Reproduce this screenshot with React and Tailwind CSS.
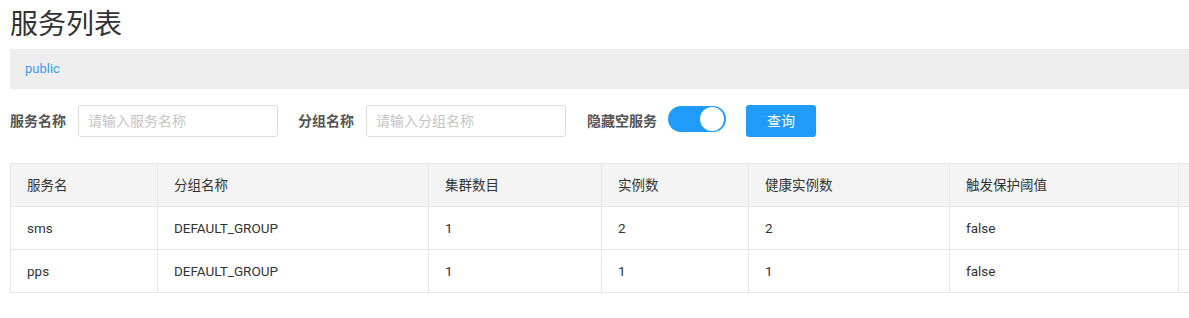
import React from "react";

const cols = [
  { title: "服务名", w: "w-[147px]" },
  { title: "分组名称", w: "w-[271px]" },
  { title: "集群数目", w: "w-[173px]" },
  { title: "实例数", w: "w-[147px]" },
  { title: "健康实例数", w: "w-[201px]" },
  { title: "触发保护阈值", w: "w-[229px]" },
  { title: "", w: "w-[200px]" },
];

const rows = [
  ["sms", "DEFAULT_GROUP", "1", "2", "2", "false", ""],
  ["pps", "DEFAULT_GROUP", "1", "1", "1", "false", ""],
];

const font = "font-['Roboto','Noto_Sans_CJK_SC',sans-serif]";

const App = () => {
  return (
    <div className={`w-[1189px] h-[318px] overflow-hidden bg-white pl-[10px] text-[#333] ${font}`}>
      <div className="w-[1400px]">
        {/* Title */}
        <h1 className="text-[28px] leading-[49px] h-[49px] font-normal text-[#333]">服务列表</h1>

        {/* Namespace bar */}
        <div className="h-[40px] bg-[#eeeeee] flex items-center pl-[15px] text-[13px] text-[#3f97f5]">
          public
        </div>

        {/* Search form */}
        <div className="flex items-center mt-[16px] h-[32px] text-[14px]">
          <span className="font-bold text-[#555] mr-[12px]">服务名称</span>
          <input
            className="w-[200px] h-[32px] border border-[#dcdcdc] rounded-[3px] px-[9px] text-[14px] placeholder:text-[#c4c4c4] outline-none mr-[20px]"
            placeholder="请输入服务名称"
          />
          <span className="font-bold text-[#555] mr-[12px]">分组名称</span>
          <input
            className="w-[200px] h-[32px] border border-[#dcdcdc] rounded-[3px] px-[9px] text-[14px] placeholder:text-[#c4c4c4] outline-none mr-[21px]"
            placeholder="请输入分组名称"
          />
          <span className="font-bold text-[#555] mr-[11px]">隐藏空服务</span>
          <div className="w-[58px] h-[26px] rounded-full bg-[#209bfa] flex items-center justify-end pr-[2px] mr-[20px] -mt-[4px]">
            <div className="w-[24px] h-[24px] rounded-full bg-white" />
          </div>
          <button className="w-[70px] h-[32px] rounded-[3px] bg-[#209bfa] text-white text-[14px]">查询</button>
        </div>

        {/* Table */}
        <table className="mt-[26px] border-collapse table-fixed text-[13.5px]">
          <thead>
            <tr className="bg-[#f4f4f4] h-[43px]">
              {cols.map((c, i) => (
                <th
                  key={i}
                  className={`${c.w} border border-[#e6e6e6] text-left font-normal pl-[16px] text-[#333]`}
                >
                  {c.title}
                </th>
              ))}
            </tr>
          </thead>
          <tbody>
            {rows.map((r) => (
              <tr key={r[0]} className="h-[43px]">
                {r.map((v, i) => (
                  <td key={i} className="border border-[#e6e6e6] pl-[16px] text-[#333]">
                    {v}
                  </td>
                ))}
              </tr>
            ))}
          </tbody>
        </table>
      </div>
    </div>
  );
};

export default App;
